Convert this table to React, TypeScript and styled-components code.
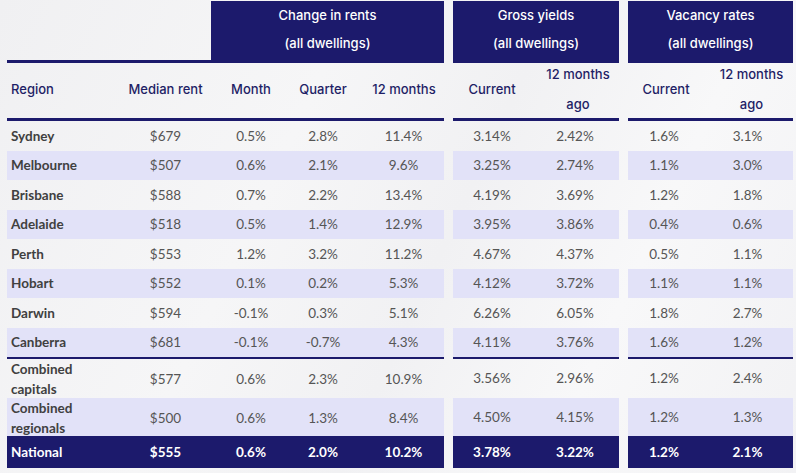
import React from "react";
import styled, { createGlobalStyle } from "styled-components";

const NAVY = "#1c1a6c";
const LAV = "#e2e2f8";

const GlobalStyle = createGlobalStyle`
  html, body { margin: 0; padding: 0; }
  body {
    width: 796px;
    height: 473px;
    overflow: hidden;
    background: linear-gradient(115deg, #f0f0f2 0%, #f6f6f7 35%, #f1f1f3 55%, #f8f8f9 75%, #f2f2f4 100%);
  }
`;

const Page = styled.div`
  display: flex;
  align-items: flex-start;
  gap: 9px;
  padding: 1px 0 0 7px;
  width: 796px;
  height: 473px;
  box-sizing: border-box;
`;

const Panel = styled.div<{ $w: number }>`
  width: ${(p) => p.$w}px;
  display: flex;
  flex-direction: column;
`;

const Grid = styled.div<{ $cols: string }>`
  display: grid;
  grid-template-columns: ${(p) => p.$cols};
`;

const GroupRow = styled(Grid)`
  height: 59px;
`;

const GroupBox = styled.div<{ $start: number }>`
  grid-column: ${(p) => p.$start} / -1;
  background: ${NAVY};
  color: #ffffff;
  font-family: Inter, "Open Sans", sans-serif;
  font-weight: 500;
  font-size: 13px;
  line-height: 28px;
  text-align: center;
`;

const SubHeadRow = styled(Grid)`
  height: 55px;
  box-sizing: border-box;
  padding-bottom: 4px;
  grid-template-rows: 51px;
  align-items: center;
`;

const SubHead = styled.div<{ $left?: boolean; $shift?: number }>`
  font-family: Inter, "Open Sans", sans-serif;
  font-weight: 500;
  font-size: 13px;
  line-height: 30px;
  color: #1f1f66;
  text-align: ${(p) => (p.$left ? "left" : "center")};
  padding-left: ${(p) => (p.$left ? 4 : p.$shift ?? 0)}px;
  white-space: nowrap;
`;

const Rule = styled.div<{ $h: number }>`
  height: ${(p) => p.$h}px;
  background: ${NAVY};
`;

type Tone = "plain" | "alt" | "total";

const Row = styled(Grid)<{ $h: number; $tone: Tone }>`
  height: ${(p) => p.$h}px;
  align-items: center;
  background: ${(p) =>
    p.$tone === "alt" ? LAV : p.$tone === "total" ? NAVY : "transparent"};
  color: ${(p) => (p.$tone === "total" ? "#ffffff" : "#555555")};
  font-weight: ${(p) => (p.$tone === "total" ? 700 : 400)};
`;

const Name = styled.div<{ $total?: boolean }>`
  font-family: Lato, "Open Sans", sans-serif;
  font-weight: 700;
  font-size: 13.5px;
  line-height: 20px;
  padding-left: 4px;
  color: ${(p) => (p.$total ? "#ffffff" : "#404040")};
`;

const Val = styled.div<{ $shift?: number }>`
  font-family: Lato, "Open Sans", sans-serif;
  font-size: 13.5px;
  text-align: center;
  padding-left: ${(p) => p.$shift ?? 0}px;
`;

type DataRow = { name: string[]; v: string[]; h: number; tone: Tone };

const rows: DataRow[] = [
  { name: ["Sydney"], v: ["$679", "0.5%", "2.8%", "11.4%", "3.14%", "2.42%", "1.6%", "3.1%"], h: 29.5, tone: "plain" },
  { name: ["Melbourne"], v: ["$507", "0.6%", "2.1%", "9.6%", "3.25%", "2.74%", "1.1%", "3.0%"], h: 29.5, tone: "alt" },
  { name: ["Brisbane"], v: ["$588", "0.7%", "2.2%", "13.4%", "4.19%", "3.69%", "1.2%", "1.8%"], h: 29.5, tone: "plain" },
  { name: ["Adelaide"], v: ["$518", "0.5%", "1.4%", "12.9%", "3.95%", "3.86%", "0.4%", "0.6%"], h: 29.5, tone: "alt" },
  { name: ["Perth"], v: ["$553", "1.2%", "3.2%", "11.2%", "4.67%", "4.37%", "0.5%", "1.1%"], h: 29.5, tone: "plain" },
  { name: ["Hobart"], v: ["$552", "0.1%", "0.2%", "5.3%", "4.12%", "3.72%", "1.1%", "1.1%"], h: 29.5, tone: "alt" },
  { name: ["Darwin"], v: ["$594", "-0.1%", "0.3%", "5.1%", "6.26%", "6.05%", "1.8%", "2.7%"], h: 29.5, tone: "plain" },
  { name: ["Canberra"], v: ["$681", "-0.1%", "-0.7%", "4.3%", "4.11%", "3.76%", "1.6%", "1.2%"], h: 29.5, tone: "alt" },
];

const summary: DataRow[] = [
  { name: ["Combined", "capitals"], v: ["$577", "0.6%", "2.3%", "10.9%", "3.56%", "2.96%", "1.2%", "2.4%"], h: 38.5, tone: "plain" },
  { name: ["Combined", "regionals"], v: ["$500", "0.6%", "1.3%", "8.4%", "4.50%", "4.15%", "1.2%", "1.3%"], h: 38.5, tone: "alt" },
  { name: ["National"], v: ["$555", "0.6%", "2.0%", "10.2%", "3.78%", "3.22%", "1.2%", "2.1%"], h: 32, tone: "total" },
];

type PanelDef = {
  w: number;
  cols: string;
  groupStart: number;
  group: string;
  heads: { lines: string[]; left?: boolean; shift?: number }[];
  pick: (r: DataRow) => { text: string; name?: boolean; shift?: number }[];
};

const panels: PanelDef[] = [
  {
    w: 437,
    cols: "113px 91px 79px 66px 88px",
    groupStart: 3,
    group: "Change in rents",
    heads: [
      { lines: ["Region"], left: true },
      { lines: ["Median rent"], shift: 0 },
      { lines: ["Month"], shift: 1 },
      { lines: ["Quarter"], shift: 0 },
      { lines: ["12 months"], shift: 8 },
    ],
    pick: (r) => [
      { text: "", name: true },
      { text: r.v[0], shift: -2 },
      { text: r.v[1], shift: 1 },
      { text: r.v[2], shift: -2 },
      { text: r.v[3], shift: 7 },
    ],
  },
  {
    w: 166,
    cols: "78px 88px",
    groupStart: 1,
    group: "Gross yields",
    heads: [{ lines: ["Current"], shift: 0 }, { lines: ["12 months", "ago"], shift: 6 }],
    pick: (r) => [{ text: r.v[4] }, { text: r.v[5], shift: -2 }],
  },
  {
    w: 165,
    cols: "72px 93px",
    groupStart: 1,
    group: "Vacancy rates",
    heads: [{ lines: ["Current"], shift: 4 }, { lines: ["12 months", "ago"], shift: 10 }],
    pick: (r) => [{ text: r.v[6], shift: -4 }, { text: r.v[7], shift: 2 }],
  },
];

function renderRow(p: PanelDef, r: DataRow) {
  return (
    <Row key={r.name.join(" ")} $cols={p.cols} $h={r.h} $tone={r.tone}>
      {p.pick(r).map((c, i) =>
        c.name ? (
          <Name key={i} $total={r.tone === "total"}>
            {r.name.map((n) => (
              <div key={n}>{n}</div>
            ))}
          </Name>
        ) : (
          <Val key={i} $shift={c.shift}>
            {c.text}
          </Val>
        )
      )}
    </Row>
  );
}

export default function App() {
  return (
    <>
      <GlobalStyle />
      <Page>
        {panels.map((p) => (
          <Panel key={p.group} $w={p.w}>
            <GroupRow $cols={p.cols}>
              <GroupBox $start={p.groupStart}>
                <div>{p.group}</div>
                <div>(all dwellings)</div>
              </GroupBox>
            </GroupRow>
            <Rule $h={3} />
            <SubHeadRow $cols={p.cols}>
              {p.heads.map((h, i) => (
                <SubHead key={i} $left={h.left} $shift={h.shift}>
                  {h.lines.map((l) => (
                    <div key={l}>{l}</div>
                  ))}
                </SubHead>
              ))}
            </SubHeadRow>
            <Rule $h={3} />
            {rows.map((r) => renderRow(p, r))}
            <Rule $h={2} />
            {summary.map((r) => renderRow(p, r))}
          </Panel>
        ))}
      </Page>
    </>
  );
}
